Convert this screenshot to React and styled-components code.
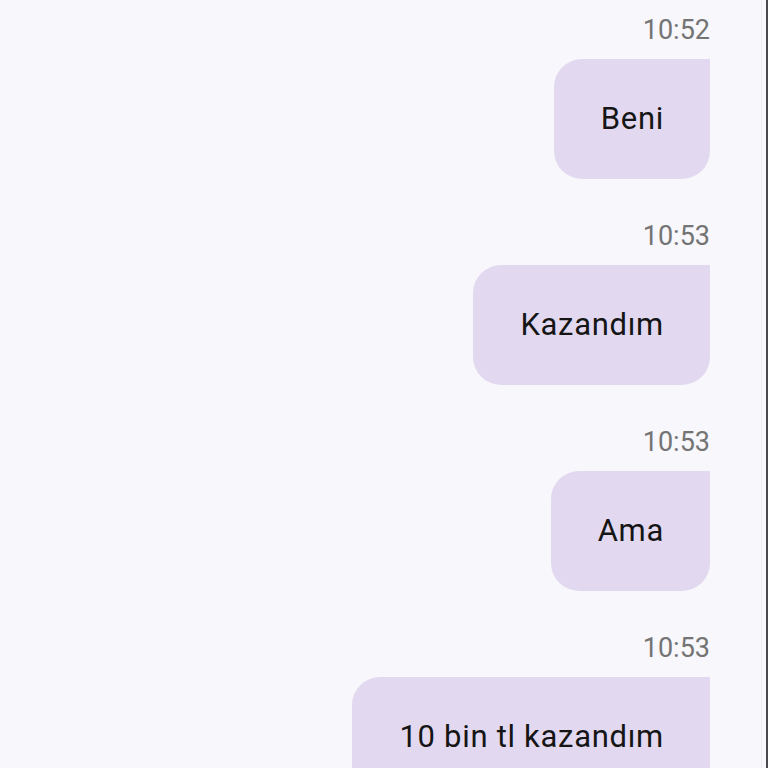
import React from "react";
import styled, { createGlobalStyle } from "styled-components";

const Global = createGlobalStyle`
  html, body { margin: 0; padding: 0; height: 100%; overflow: hidden; }
  body { background: #f8f7fb; font-family: Roboto, "Noto Sans", sans-serif; }
`;

const Screen = styled.div`
  height: 768px;
  overflow: hidden;
  box-sizing: border-box;
  background: #f8f7fb;
  display: flex;
  justify-content: flex-end;
`;

const Thread = styled.div`
  flex: 1;
  display: flex;
  flex-direction: column;
  align-items: flex-end;
  padding: 14px 51px 0 0;
  border-right: 1px solid #efeef3;
`;

const Edge = styled.div`
  width: 2px;
  margin-left: 4px;
  background: #4a4a4c;
`;

const Block = styled.div`
  display: flex;
  flex-direction: column;
  align-items: flex-end;
  margin-bottom: 41px;
`;

const Time = styled.div`
  font-size: 27px;
  line-height: 32px;
  color: #747474;
  margin-bottom: 13px;
`;

const Bubble = styled.div`
  box-sizing: border-box;
  height: 120px;
  padding: 42px 46px 42px 47px;
  background: #e2d9f0;
  color: #151515;
  font-size: 31px;
  line-height: 36px;
  letter-spacing: 0.7px;
  border-radius: 28px 0 28px 28px;
  white-space: nowrap;
`;

const messages = [
  { time: "10:52", text: "Beni" },
  { time: "10:53", text: "Kazandım" },
  { time: "10:53", text: "Ama" },
  { time: "10:53", text: "10 bin tl kazandım" },
];

export default function App() {
  return (
    <>
      <Global />
      <Screen>
        <Thread>
          {messages.map((m, i) => (
            <Block key={i}>
              <Time>{m.time}</Time>
              <Bubble>{m.text}</Bubble>
            </Block>
          ))}
        </Thread>
        <Edge />
      </Screen>
    </>
  );
}
